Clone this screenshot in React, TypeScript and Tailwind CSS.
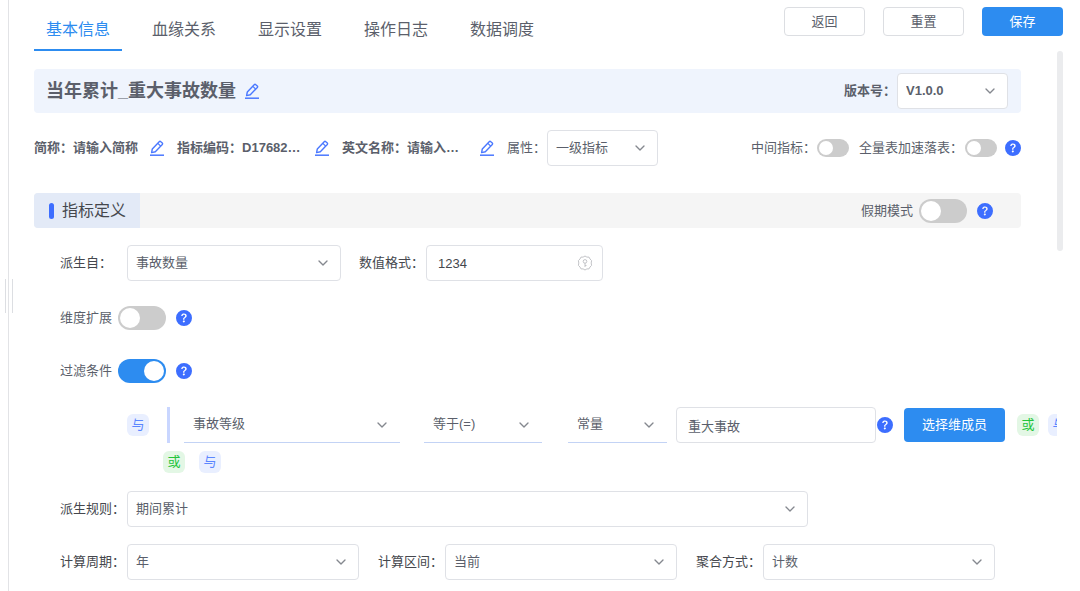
import type { ReactNode } from "react";
import { BsQuestionCircleFill } from "react-icons/bs";
import { ChevronDown } from "lucide-react";
import clsx from "clsx";

const tabs = ["基本信息", "血缘关系", "显示设置", "操作日志", "数据调度"];

function EditIcon() {
  return (
    <svg viewBox="0 0 16 16" fill="none" stroke="#4a78ff" strokeLinejoin="round" className="size-4">
      <path d="M2.6 12.6 3.3 9 10.2 1.7Q11 1 11.8 1.7L13.3 3Q14 3.7 13.3 4.5L6.3 11.8Z" strokeWidth="1.4" />
      <path d="M8.8 3.4 11.6 6" strokeWidth="1.2" />
      <path d="M1 15.2H15" strokeWidth="1.5" />
    </svg>
  );
}

function Help() {
  return (
    <button type="button" aria-label="帮助" className="shrink-0 text-[#3d6eff]">
      <BsQuestionCircleFill className="size-4" />
    </button>
  );
}

function BadgeIcon() {
  return (
    <svg viewBox="0 0 16 16" fill="none" stroke="#c3c4c8" className="size-4">
      <path d="M8 1 9.9 2.1H12L13 4 14.6 5.6 14.2 8 14.6 10.4 13 12 12 13.9H9.9L8 15 6.1 13.9H4L3 12 1.4 10.4 1.8 8 1.4 5.6 3 4 4 2.1H6.1Z" strokeLinejoin="round" />
      <circle cx="8" cy="6.4" r="1.8" />
      <path d="M8 8V12M8 10.5H9.5" />
    </svg>
  );
}

function Select({ label, value, className, line = false }: { label: string; value: string; className: string; line?: boolean }) {
  return (
    <div className={clsx("relative shrink-0", className)}>
      <select
        aria-label={label}
        className={clsx(
          "h-9 w-full appearance-none pr-8 outline-none",
          line ? "border-b border-[#c3d3f5] pb-0.5 pl-[9px]" : "rounded border border-[#dfe1e6] bg-white pl-2"
        )}
      >
        <option>{value}</option>
      </select>
      <ChevronDown className="pointer-events-none absolute top-2.5 right-2.5 size-4 text-[#85888f]" strokeWidth={2} />
    </div>
  );
}

function Switch({ label, small = false, checked = false }: { label: string; small?: boolean; checked?: boolean }) {
  return (
    <input
      type="checkbox"
      role="switch"
      aria-label={label}
      defaultChecked={checked}
      className={clsx(
        "shrink-0 appearance-none rounded-full bg-[#cccccc] p-0.5 before:block before:rounded-full before:bg-white checked:bg-[#2d8cf0]",
        small ? "h-[18px] w-8 before:size-3.5 checked:before:ml-3.5" : "h-6 w-12 before:size-5 checked:before:ml-6"
      )}
    />
  );
}

function Chip({ or = false }: { or?: boolean }) {
  return (
    <button
      type="button"
      className={clsx(
        "h-[22px] w-[22px] shrink-0 rounded-md leading-5",
        or ? "bg-[#e3f7e5] text-[#22c43a]" : "bg-[#e9efff] text-[#5b86ff]"
      )}
    >
      {or ? "或" : "与"}
    </button>
  );
}

function EditableField({ label, value, className }: { label: string; value: string; className: string }) {
  return (
    <div className={clsx("flex shrink-0 items-center justify-between font-bold", className)}>
      <span>
        {label}：{value}
      </span>
      <button type="button" aria-label={"编辑" + label}>
        <EditIcon />
      </button>
    </div>
  );
}

function Label({ children, className }: { children: ReactNode; className?: string }) {
  return <span className={clsx("shrink-0 text-[#45474d]", className)}>{children}</span>;
}

export default function App() {
  return (
    <div className="flex h-screen overflow-hidden bg-white font-['Liberation_Sans','Noto_Sans_CJK_SC',sans-serif] text-[13px] text-[#5b5f6b]">
      {/* splitter */}
      <div className="relative flex w-[9px] shrink-0 items-center border-r border-[#e2e3e6]">
        <div className="absolute left-[5px] h-[34px] w-2 border-x border-[#dcdee2]" />
      </div>

      <div className="flex min-w-0 flex-1 flex-col">
        <header className="flex h-[51px] shrink-0 justify-between pr-[17px] pl-[25px]">
          <nav className="flex gap-[18px] text-base">
            {tabs.map((tab, i) => (
              <button
                key={tab}
                type="button"
                className={clsx(
                  "border-b-2 px-3 pt-2.5",
                  i === 0 ? "border-[#2d8cf0] text-[#2d8cf0]" : "border-transparent"
                )}
              >
                {tab}
              </button>
            ))}
          </nav>
          <div className="flex gap-[18px] pt-[7px]">
            <button type="button" className="h-[29px] w-[81px] rounded border border-[#dcdee2]">返回</button>
            <button type="button" className="h-[29px] w-[81px] rounded border border-[#dcdee2]">重置</button>
            <button type="button" className="h-[29px] w-[81px] rounded bg-[#2d8cf0] text-white">保存</button>
          </div>
        </header>

        <div className="flex min-h-0 flex-1 pr-[17px]">
          <main className="min-w-0 flex-1 overflow-hidden pt-[18px] pr-9 pl-[25px]">
            <div className="flex h-11 items-center rounded bg-[#eff4fd] pr-[13px] pl-3">
              <h1 className="mr-2 text-lg font-bold">当年累计_重大事故数量</h1>
              <button type="button" aria-label="编辑名称">
                <EditIcon />
              </button>
              <span className="ml-auto w-[53px] font-bold">版本号：</span>
              <Select label="版本号" value="V1.0.0" className="w-[111px] font-bold" />
            </div>

            <div className="mt-[17px] flex items-center">
              <EditableField label="简称" value="请输入简称" className="mr-3 w-[131px]" />
              <EditableField label="指标编码" value="D17682…" className="mr-3 w-[153px]" />
              <EditableField label="英文名称" value="请输入…" className="mr-3 w-[153px]" />
              <span className="w-10 shrink-0">属性：</span>
              <Select label="属性" value="一级指标" className="w-[111px]" />
              <div className="ml-auto flex items-center">
                <span className="w-[66px]">中间指标：</span>
                <Switch label="中间指标" small />
                <span className="ml-2.5 w-[106px]">全量表加速落表：</span>
                <Switch label="全量表加速落表" small />
                <span className="ml-2 flex">
                  <Help />
                </span>
              </div>
            </div>

            <div className="mt-[27px] flex h-[35px] items-center overflow-hidden rounded bg-[#f5f5f5] pr-7">
              <h2 className="flex h-full w-[106px] items-center gap-2 bg-[#e3eaf7] pl-[15px] text-base text-[#45474d]">
                <span className="h-4 w-[5px] rounded-sm bg-[#3d6eff]" />
                指标定义
              </h2>
              <div className="ml-auto flex items-center">
                <span className="w-[58px]">假期模式</span>
                <Switch label="假期模式" />
                <span className="ml-2.5 flex">
                  <Help />
                </span>
              </div>
            </div>

            <div className="pl-[26px]">
              <div className="mt-[17px] flex items-center">
                <Label className="w-[67px]">派生自：</Label>
                <Select label="派生自" value="事故数量" className="w-[214px]" />
                <Label className="ml-[18px] w-[67px]">数值格式：</Label>
                <div className="relative w-[177px]">
                  <input
                    aria-label="数值格式"
                    defaultValue="1234"
                    className="h-9 w-full rounded border border-[#dfe1e6] px-[11px] text-[#45474d] outline-none"
                  />
                  <span className="pointer-events-none absolute top-2.5 right-2.5">
                    <BadgeIcon />
                  </span>
                </div>
              </div>

              <div className="mt-[25px] flex items-center">
                <span className="w-[58px]">维度扩展</span>
                <Switch label="维度扩展" />
                <span className="ml-2.5 flex">
                  <Help />
                </span>
              </div>
              <div className="mt-[29px] flex items-center">
                <span className="w-[58px]">过滤条件</span>
                <Switch label="过滤条件" checked />
                <span className="ml-2.5 flex">
                  <Help />
                </span>
              </div>

              <div className="mt-6 flex items-center pl-[67px]">
                <Chip />
                <div className="ml-[18px] h-9 w-[3px] shrink-0 bg-[#c9d6ff]" />
                <Select label="维度" value="事故等级" className="ml-3.5 w-[216px]" line />
                <Select label="运算符" value="等于(=)" className="ml-6 w-[118px]" line />
                <Select label="值类型" value="常量" className="ml-[26px] w-[99px]" line />
                <input
                  aria-label="值"
                  defaultValue="重大事故"
                  className="ml-[9px] h-9 w-[200px] shrink-0 rounded border border-[#dfe1e6] px-[11px] outline-none"
                />
                <span className="mr-[11px] ml-px flex">
                  <Help />
                </span>
                <button type="button" className="mr-3 h-[34px] w-[101px] shrink-0 rounded bg-[#2d8cf0] text-white">
                  选择维成员
                </button>
                <Chip or />
                <span className="ml-[9px] flex">
                  <Chip />
                </span>
              </div>
              <div className="mt-2 flex gap-3.5 pl-[103px]">
                <Chip or />
                <Chip />
              </div>

              <div className="mt-[18px] flex items-center">
                <Label className="w-[67px]">派生规则：</Label>
                <Select label="派生规则" value="期间累计" className="w-[681px]" />
              </div>
              <div className="mt-[17px] flex items-center">
                <Label className="w-[67px]">计算周期：</Label>
                <Select label="计算周期" value="年" className="w-[232px]" />
                <Label className="ml-[19px] w-[67px]">计算区间：</Label>
                <Select label="计算区间" value="当前" className="w-[232px]" />
                <Label className="ml-[19px] w-[67px]">聚合方式：</Label>
                <Select label="聚合方式" value="计数" className="w-[232px]" />
              </div>
            </div>
          </main>
          <div className="h-[200px] w-1.5 shrink-0 rounded-full bg-[#ebecee]" />
        </div>
      </div>
    </div>
  );
}
